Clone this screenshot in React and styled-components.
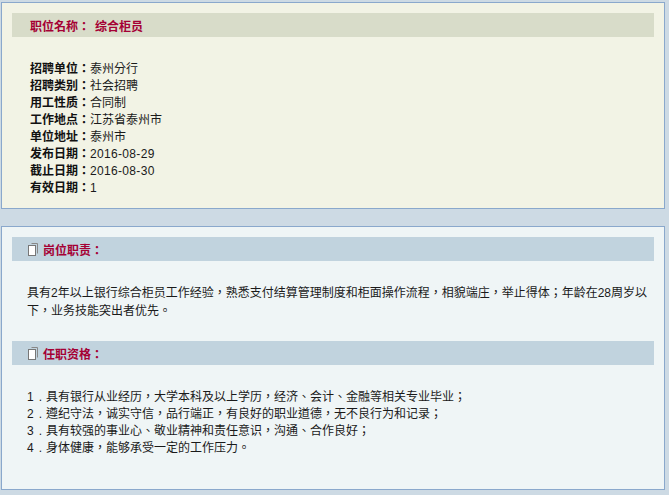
import styled, { createGlobalStyle } from "styled-components"

const GlobalStyle = createGlobalStyle`
  html, body {
    margin: 0;
    padding: 0;
    background: #cddae4;
  }
  body {
    font-family: "Liberation Sans", "Noto Sans CJK TC", sans-serif;
    font-size: 12px;
    color: #1a1a1a;
  }
`

const Page = styled.div`
  width: 669px;
  height: 495px;
  overflow: hidden;
  padding-top: 2px;
  box-sizing: border-box;
`

const Panel = styled.section`
  box-sizing: border-box;
  width: 664px;
  height: ${(p) => p.$height}px;
  margin: 0 0 17px 1px;
  padding: 10px 10px 0;
  background: ${(p) => p.$bg};
  border: 1px solid #8aa8cc;
`

const HeadBar = styled.div`
  display: flex;
  align-items: center;
  gap: 5px;
  height: 24px;
  padding-left: ${(p) => p.$indent}px;
  background: ${(p) => p.$bg};
  color: #a50034;
  font-weight: 700;
`

const InfoList = styled.dl`
  margin: 24px 0 0 18px;
  line-height: 17px;
`

const InfoRow = styled.div`
  display: flex;
`

const InfoLabel = styled.dt`
  font-weight: 700;
  color: #111;
`

const InfoValue = styled.dd`
  margin: 0;
`

const Num = styled.span`
  letter-spacing: 0.33px;
`

const Body = styled.p`
  margin: ${(p) => p.$top}px 0 ${(p) => p.$bottom}px 15px;
  line-height: 18px;
`

const Duties = styled.ol`
  list-style: none;
  margin: 24px 0 0 15px;
  padding: 0;
  line-height: 17px;
`

const Mark = styled.span`
  display: inline-flex;
  justify-content: space-between;
  width: 15px;
  margin-right: 4px;
`

const infoRows = [
  ["招聘单位：", "泰州分行"],
  ["招聘类别：", "社会招聘"],
  ["用工性质：", "合同制"],
  ["工作地点：", "江苏省泰州市"],
  ["单位地址：", "泰州市"],
  ["发布日期：", <Num>2016-08-29</Num>],
  ["截止日期：", <Num>2016-08-30</Num>],
  ["有效日期：", <Num>1</Num>],
]

const duties = [
  "具有银行从业经历，大学本科及以上学历，经济、会计、金融等相关专业毕业；",
  "遵纪守法，诚实守信，品行端正，有良好的职业道德，无不良行为和记录；",
  "具有较强的事业心、敬业精神和责任意识，沟通、合作良好；",
  "身体健康，能够承受一定的工作压力。",
]

function CopyIcon() {
  return (
    <svg width="10" height="13" viewBox="0 0 10 13" fill="none">
      <path d="M3.5 .5H9.5V10.5" stroke="#888" />
      <rect x=".5" y="2.5" width="7" height="10" fill="#fff" stroke="#777" />
    </svg>
  )
}

export default function App() {
  return (
    <Page>
      <GlobalStyle />
      <Panel $height={207} $bg="#f2f3e5">
        <HeadBar $indent={18} $bg="#d8dcc9">
          <span>职位名称：</span>
          <span>综合柜员</span>
        </HeadBar>
        <InfoList>
          {infoRows.map(([label, value]) => (
            <InfoRow key={label}>
              <InfoLabel>{label}</InfoLabel>
              <InfoValue>{value}</InfoValue>
            </InfoRow>
          ))}
        </InfoList>
      </Panel>
      <Panel $height={264} $bg="#eff5f6">
        <HeadBar $indent={16} $bg="#c1d3de">
          <CopyIcon />
          岗位职责：
        </HeadBar>
        <Body $top={23} $bottom={21}>
          具有2年以上银行综合柜员工作经验，熟悉支付结算管理制度和柜面操作流程，相貌端庄，举止得体；年龄在28周岁以下，业务技能突出者优先。
        </Body>
        <HeadBar $indent={16} $bg="#c1d3de">
          <CopyIcon />
          任职资格：
        </HeadBar>
        <Duties>
          {duties.map((line, i) => (
            <li key={line}>
              <Mark>
                <span>{i + 1}</span>
                <span>.</span>
              </Mark>
              {line}
            </li>
          ))}
        </Duties>
      </Panel>
    </Page>
  )
}
